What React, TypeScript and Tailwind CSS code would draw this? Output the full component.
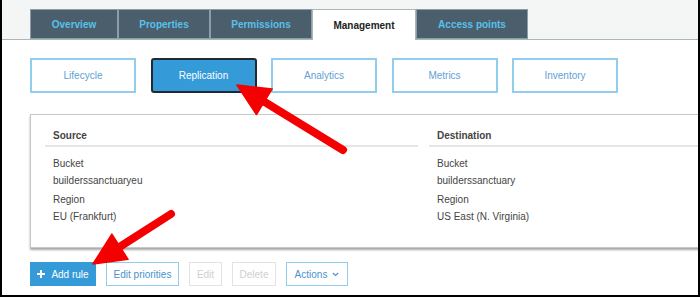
import React from "react";

function Arrow({ tip, tail }: { tip: [number, number]; tail: [number, number] }) {
  const dx = tail[0] - tip[0];
  const dy = tail[1] - tip[1];
  const len = Math.hypot(dx, dy);
  const ux = dx / len;
  const uy = dy / len;
  const nx = -uy;
  const ny = ux;
  const L = 32;
  const W = 15;
  const bx = tip[0] + L * ux;
  const by = tip[1] + L * uy;
  const c1 = [bx + W * nx, by + W * ny];
  const c2 = [bx - W * nx, by - W * ny];
  return (
    <g>
      <line x1={bx - 4 * ux} y1={by - 4 * uy} x2={tail[0]} y2={tail[1]} stroke="#f40000" strokeWidth={8} strokeLinecap="round" />
      <polygon points={`${tip[0]},${tip[1]} ${c1[0]},${c1[1]} ${c2[0]},${c2[1]}`} fill="#f40000" stroke="#f40000" strokeWidth={1.5} strokeLinejoin="round" />
    </g>
  );
}

export default function App() {
  const tabs = [
    { label: "Overview", w: "w-[88px]" },
    { label: "Properties", w: "w-[92px]" },
    { label: "Permissions", w: "w-[102px]" },
    { label: "Management", w: "w-[104px]", active: true },
    { label: "Access points", w: "w-[112px]" },
  ];
  const subs = ["Lifecycle", "Replication", "Analytics", "Metrics", "Inventory"];
  return (
    <div className="relative w-[700px] h-[297px] overflow-hidden bg-white border-l-2 border-r-2 border-b-2 border-black font-['Liberation_Sans',Arial,sans-serif] text-[10px]">
      {/* tab bar */}
      <div className="h-[40px] bg-[#f4f6f6] border-b border-[#aab7b8] flex items-end pl-[28px]">
        {tabs.map((t) =>
          t.active ? (
            <div
              key={t.label}
              className={`${t.w} h-[31px] -mb-px bg-white border-l border-r border-t border-[#aab7b8] flex items-center justify-center font-bold text-[#222]`}
            >
              {t.label}
            </div>
          ) : (
            <div
              key={t.label}
              className={`${t.w} h-[30px] bg-[#4b5e6b] border border-[#8d9ca6] flex items-center justify-center font-bold text-[#57c1ec]`}
            >
              {t.label}
            </div>
          )
        )}
      </div>

      {/* sub buttons */}
      <div className="mt-[18px] ml-[28px] flex gap-[14.5px]">
        {subs.map((s) =>
          s === "Replication" ? (
            <div
              key={s}
              className="w-[106px] h-[35px] rounded-[3px] bg-[#359ad8] border-2 border-[#1f2a33] flex items-center justify-center text-white"
            >
              {s}
            </div>
          ) : (
            <div
              key={s}
              className="w-[106px] h-[35px] border-2 border-[#92cdee] flex items-center justify-center text-[#5f9fd6]"
            >
              {s}
            </div>
          )
        )}
      </div>

      {/* panel */}
      <div className="mt-[21px] ml-[28px] w-[720px] h-[134px] border border-[#c8c8c8] shadow-[0_2px_2px_rgba(0,0,0,0.35)] pt-[14px] pl-[14px] flex gap-[11px] text-[#444]">
        <div className="w-[373px]">
          <div className="border-b-2 border-[#e6e6e6] pl-[8px] pb-[2px] leading-[14px] font-bold">Source</div>
          <div className="pl-[8px] mt-[8px] leading-[17px]">
            <div>Bucket</div>
            <div>builderssanctuaryeu</div>
            <div className="mt-[2px]">Region</div>
            <div>EU (Frankfurt)</div>
          </div>
        </div>
        <div className="flex-1">
          <div className="border-b-2 border-[#e6e6e6] pl-[8px] pb-[2px] leading-[14px] font-bold">Destination</div>
          <div className="pl-[8px] mt-[8px] leading-[17px]">
            <div>Bucket</div>
            <div>builderssanctuary</div>
            <div className="mt-[2px]">Region</div>
            <div>US East (N. Virginia)</div>
          </div>
        </div>
      </div>

      {/* action buttons */}
      <div className="mt-[14px] ml-[28px] flex gap-[10px]">
        <div className="w-[66px] h-[24px] bg-[#359ad8] text-white flex items-center justify-center gap-[6px]">
          <svg width="8" height="8" viewBox="0 0 8 8">
            <path d="M4 0v8M0 4h8" stroke="white" strokeWidth="2" />
          </svg>
          <span>Add rule</span>
        </div>
        <div className="w-[73px] h-[24px] border border-[#92cdee] text-[#4a92d0] flex items-center justify-center">Edit priorities</div>
        <div className="w-[33px] h-[24px] border border-[#e3e3e3] text-[#cfcfcf] flex items-center justify-center">Edit</div>
        <div className="w-[44px] h-[24px] border border-[#e3e3e3] text-[#cfcfcf] flex items-center justify-center">Delete</div>
        <div className="w-[62px] h-[24px] border border-[#92cdee] text-[#4a92d0] flex items-center justify-center gap-[5px]">
          <span>Actions</span>
          <svg width="7" height="5" viewBox="0 0 7 5">
            <path d="M0.8 1l2.7 2.5L6.2 1" stroke="#4a92d0" strokeWidth="1.1" fill="none" />
          </svg>
        </div>
      </div>

      {/* annotation arrows */}
      <svg className="absolute left-[-2px] top-0 pointer-events-none" width="700" height="297" viewBox="0 0 700 297">
        <Arrow tip={[237, 85]} tail={[343, 150]} />
        <Arrow tip={[93, 264]} tail={[171, 214]} />
      </svg>
    </div>
  );
}
